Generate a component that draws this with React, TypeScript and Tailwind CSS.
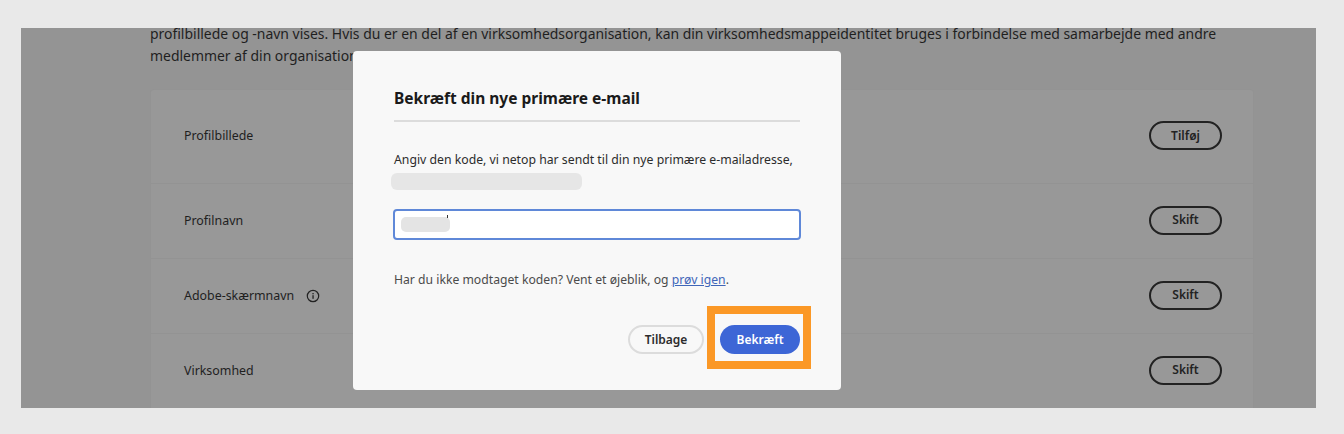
import React from 'react';

const rows = [
  { label: 'Profilbillede', action: 'Tilføj', height: 'h-[93px]' },
  { label: 'Profilnavn', action: 'Skift', height: 'h-[75px]' },
  { label: 'Adobe-skærmnavn', action: 'Skift', height: 'h-[75px]', info: true },
  { label: 'Virksomhed', action: 'Skift', height: 'h-[75px]' },
];

function InfoIcon() {
  return (
    <svg width="14" height="14" viewBox="0 0 14 14" fill="none" className="ml-[12px]">
      <circle cx="7" cy="7" r="5.7" stroke="#222" strokeWidth="1.2" />
      <rect x="6.4" y="6.2" width="1.3" height="3.6" fill="#222" />
      <rect x="6.4" y="4" width="1.3" height="1.3" fill="#222" />
    </svg>
  );
}

export default function App() {
  return (
    <div className="w-[1344px] h-[434px] bg-[#e9e9e9] pt-[28px] pl-[21px] font-['Noto_Sans',sans-serif] overflow-hidden">
      <div className="relative w-[1295px] h-[380px] bg-[#949494] px-[129px]">
        <div className="text-[13.95px] text-[#1f1f1f] whitespace-nowrap">
          <p className="leading-[12px]">
            profilbillede og -navn vises. Hvis du er en del af en virksomhedsorganisation, kan din virksomhedsmappeidentitet bruges i forbindelse med samarbejde med andre
          </p>
          <p className="mt-[5px] leading-[22px]">medlemmer af din organisation</p>
        </div>

        <div className="mt-[22px] w-[1104px] bg-[#989898] border border-b-0 border-[#939393] rounded-t-[4px]">
          {rows.map((row, i) => (
            <div
              key={row.label}
              className={`flex items-center justify-between pl-[33px] pr-[31px] ${row.height} ${i > 0 ? 'border-t border-[#939393]' : ''}`}
            >
              <div className="flex items-center text-[12.4px] text-[#1f1f1f]">
                {row.label}
                {row.info && <InfoIcon />}
              </div>
              <button className="mb-[2px] w-[73px] h-[29px] rounded-full border-2 border-[#222] text-[12px] font-semibold text-[#222]">
                {row.action}
              </button>
            </div>
          ))}
        </div>

        {/* dialog */}
        <div className="absolute left-[332px] top-[23px] w-[488px] h-[339px] bg-[#f8f8f8] rounded-[4px] px-[41px] pt-[37px]">
          <h2 className="text-[15.5px] leading-[20px] font-bold text-[#1a1a1a] whitespace-nowrap">Bekræft din nye primære e-mail</h2>
          <div className="mt-[12px] h-[2px] w-[406px] bg-[#dcdcdc]" />
          <p className="mt-[29px] text-[12.25px] leading-[18px] text-[#2c2c2c] whitespace-nowrap">
            Angiv den kode, vi netop har sendt til din nye primære e-mailadresse,
          </p>
          <div className="mt-[4px] -ml-[3px] w-[191px] h-[17px] rounded-[6px] bg-[#e6e6e6]" />
          <div className="relative mt-[19px] -ml-px w-[408px] h-[31px] bg-white border-2 border-[#5f88d8] rounded-[4px]">
            <div className="absolute left-[6px] top-[6px] w-[49px] h-[15px] rounded-[5px] bg-[#e4e4e4]" />
            <div className="absolute left-[52px] top-[4px] w-px h-[3px] bg-[#333]" />
          </div>
          <p className="mt-[31px] text-[12.2px] leading-[18px] text-[#4b4b4b] whitespace-nowrap">
            Har du ikke modtaget koden? Vent et øjeblik, og{' '}
            <a href="#" className="text-[#3f66b8] underline">prøv igen</a>.
          </p>
          <div className="mt-[36px] flex justify-end gap-[16px]">
            <button className="w-[76px] h-[29px] rounded-full border-2 border-[#dcdcdc] text-[12px] font-semibold text-[#2c2c2c]">
              Tilbage
            </button>
            <button className="w-[80px] h-[29px] rounded-full bg-[#3d66d6] text-[12px] font-semibold text-white">
              Bekræft
            </button>
          </div>
          {/* orange highlight round the confirm button */}
          <div className="absolute left-[354px] top-[255px] w-[104px] h-[63px] border-[8px] border-[#fb9826]" />
        </div>
      </div>
    </div>
  );
}
